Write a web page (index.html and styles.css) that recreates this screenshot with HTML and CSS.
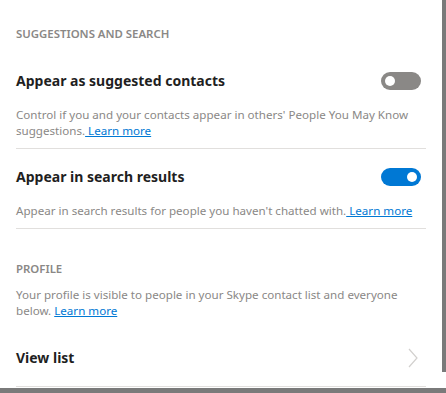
FILE: index.html
```html
<!DOCTYPE html>
<html>
<head>
<meta charset="utf-8">
<link rel="stylesheet" href="styles.css">
</head>
<body>
<div class="panel">
  <div class="section-title first">SUGGESTIONS AND SEARCH</div>
  <div class="row">
    <div class="row-title">Appear as suggested contacts</div>
    <div class="toggle off"><span class="knob"></span></div>
  </div>
  <div class="desc">Control if you and your contacts appear in others' People You May Know suggestions.<a href="#" class="link"> Learn more</a></div>
  <div class="sep"></div>
  <div class="row">
    <div class="row-title">Appear in search results</div>
    <div class="toggle on"><span class="knob"></span></div>
  </div>
  <div class="desc">Appear in search results for people you haven't chatted with.<a href="#" class="link"> Learn more</a></div>
  <div class="sep"></div>
  <div class="section-title profile">PROFILE</div>
  <div class="desc small-gap">Your profile is visible to people in your Skype contact list and everyone below. <a href="#" class="link">Learn more</a></div>
  <div class="row view">
    <div class="row-title">View list</div>
    <svg class="chev" width="10" height="20" viewBox="0 0 10 20"><path d="M1 1 L9 10 L1 19" fill="none" stroke="#d2d0ce" stroke-width="1.2"/></svg>
  </div>
  <div class="sep"></div>
  <div class="scrollbar"></div>
</div>
</body>
</html>
```
FILE: styles.css
```css
html, body {
  margin: 0;
  padding: 0;
}
body {
  background: #7a7a7a;
  width: 446px;
  height: 393px;
  overflow: hidden;
  font-family: "Noto Sans", "Open Sans", sans-serif;
}
.panel {
  position: relative;
  background: #fff;
  height: 388px;
  overflow: hidden;
  padding: 0 20px 0 16px;
  box-sizing: border-box;
}
.scrollbar {
  position: absolute;
  right: 0;
  top: 0;
  width: 4px;
  height: 372px;
  background: #7a7a7a;
}
.section-title {
  font-size: 11.4px;
  font-weight: 600;
  color: #8a8886;
  line-height: 16px;
}
.section-title.first {
  padding-top: 26px;
}
.section-title.profile {
  padding-top: 32px;
}
.row {
  display: flex;
  align-items: center;
  justify-content: space-between;
  margin-top: 29px;
  height: 20px;
  padding-right: 5px;
}
.sep + .row {
  margin-top: 18px;
}
.row-title {
  font-size: 14px;
  font-weight: 700;
  color: #1f1f1f;
  line-height: 20px;
}
.toggle {
  width: 40px;
  height: 18px;
  border-radius: 9px;
  display: flex;
  align-items: center;
  box-sizing: border-box;
  padding: 0 4px;
}
.toggle.off {
  background: #8a8886;
  justify-content: flex-start;
}
.toggle.on {
  background: #0078d4;
  justify-content: flex-end;
}
.knob {
  width: 10px;
  height: 10px;
  border-radius: 50%;
  background: #fff;
}
.desc {
  font-size: 11.6px;
  line-height: 16px;
  color: #8a8886;
  margin-top: 16px;
}
.desc.small-gap {
  margin-top: 10px;
}
.link {
  color: #0078d4;
  text-decoration: underline;
}
.sep {
  height: 1px;
  background: #e1dfdd;
  margin-top: 9px;
}
.row.view {
  margin-top: 29px;
}
.chev {
  display: block;
  margin-right: 3px;
}
.view + .sep {
  margin-top: 18px;
}
```
